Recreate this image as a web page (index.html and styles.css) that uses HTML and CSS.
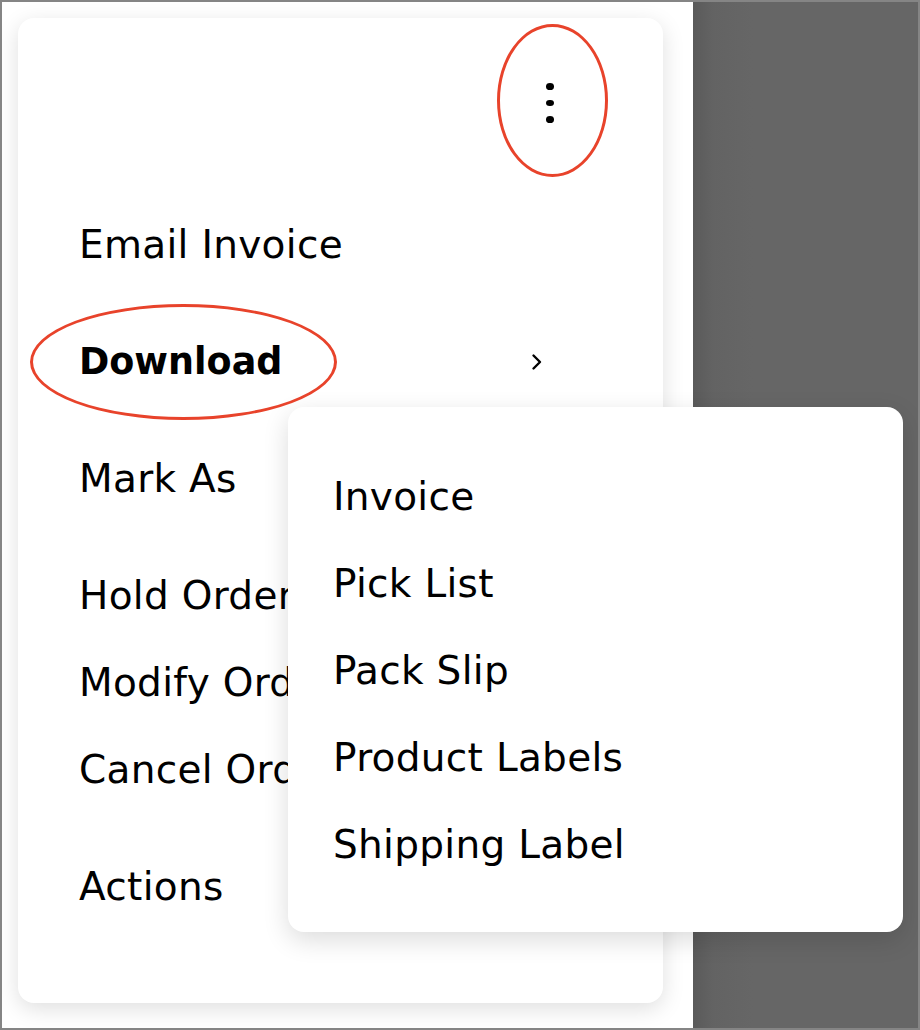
FILE: index.html
```html
<!DOCTYPE html>
<html lang="en">
<head>
    <meta charset="UTF-8">
    <meta name="viewport" content="width=device-width, initial-scale=1.0">
    <title>Order actions menu</title>
    <link rel="stylesheet" href="styles.css">
</head>
<body>
    <div class="frame">
        <div class="stage">
            <div class="menu-card">
                <div class="menu-head">
                    <button class="more-btn" aria-label="More actions">
                        <span class="dot"></span>
                        <span class="dot"></span>
                        <span class="dot"></span>
                    </button>
                </div>

                <div class="menu-list">
                    <div class="menu-group">
                        <div class="menu-item">Email Invoice</div>
                    </div>
                    <div class="menu-group">
                        <div class="menu-item bold">
                            Download
                            <svg class="chev" width="12" height="18" viewBox="0 0 12 18">
                                <path d="M2.5 2.5 L9 9 L2.5 15.5" fill="none" stroke="#000" stroke-width="2.4" stroke-linecap="round" stroke-linejoin="round"/>
                            </svg>
                        </div>
                    </div>
                    <div class="menu-group">
                        <div class="menu-item">Mark As</div>
                    </div>
                    <div class="menu-group">
                        <div class="menu-item">Hold Order</div>
                        <div class="menu-item">Modify Order</div>
                        <div class="menu-item">Cancel Order</div>
                    </div>
                    <div class="menu-group">
                        <div class="menu-item">Actions</div>
                    </div>
                </div>

                <!-- Submenu for Download -->
                <div class="submenu">
                    <div class="menu-item">Invoice</div>
                    <div class="menu-item">Pick List</div>
                    <div class="menu-item">Pack Slip</div>
                    <div class="menu-item">Product Labels</div>
                    <div class="menu-item">Shipping Label</div>
                </div>

                <!-- red annotation rings -->
                <div class="ring ring-more"></div>
                <div class="ring ring-download"></div>
            </div>
        </div>
        <div class="backdrop"></div>
    </div>
</body>
</html>
```

FILE: styles.css
```css
body {
    margin: 0;
    font-family: "DejaVu Sans", "Noto Sans", sans-serif;
    color: #000;
    background-color: #fff;
}

.frame {
    width: 920px;
    height: 1030px;
    box-sizing: border-box;
    border: 2px solid rgba(0, 0, 0, 0.48);
    display: flex;
    overflow: hidden;
}

.stage {
    width: 691px;
    padding: 16px 0 0 16px;
    box-sizing: border-box;
    background-color: #fff;
}

.backdrop {
    flex: 1;
    background: linear-gradient(to right, #5a5a5a 0, #636363 20px, #666 60px);
}

.menu-card {
    position: relative;
    width: 645px;
    height: 985px;
    box-sizing: border-box;
    background-color: #fff;
    border-radius: 16px;
    box-shadow: 0 6px 22px rgba(0, 0, 0, 0.13);
}

.menu-head {
    height: 183px;
    display: flex;
    justify-content: flex-end;
    align-items: flex-start;
    padding: 65px 93px 0 0;
    box-sizing: border-box;
}

.more-btn {
    width: 40px;
    height: 40px;
    border: none;
    background: none;
    padding: 0;
    display: flex;
    flex-direction: column;
    align-items: center;
    justify-content: center;
    gap: 10px;
    cursor: pointer;
}

.dot {
    width: 8px;
    height: 8px;
    border-radius: 50%;
    background-color: #000;
}

.menu-list {
    padding: 0 120px 0 61px;
}

.menu-group + .menu-group {
    margin-top: 30px;
}

.menu-item {
    height: 87px;
    display: flex;
    align-items: center;
    font-size: 39px;
    letter-spacing: 0.3px;
    white-space: nowrap;
    cursor: pointer;
}

.menu-item.bold {
    font-weight: bold;
    font-size: 36.5px;
    letter-spacing: 0;
}

.chev {
    margin-left: auto;
}

.submenu {
    position: absolute;
    left: 270px;
    top: 389px;
    width: 615px;
    box-sizing: border-box;
    padding: 46px 0 44px 45px;
    background-color: #fff;
    border-radius: 16px;
    box-shadow: 0 8px 26px rgba(0, 0, 0, 0.14);
}

.ring {
    position: absolute;
    border: 3.5px solid #e8432b;
    border-radius: 50%;
    box-sizing: border-box;
    pointer-events: none;
}

.ring-more {
    left: 479px;
    top: 6px;
    width: 111px;
    height: 153px;
}

.ring-download {
    left: 12px;
    top: 286px;
    width: 307px;
    height: 116px;
}
```
